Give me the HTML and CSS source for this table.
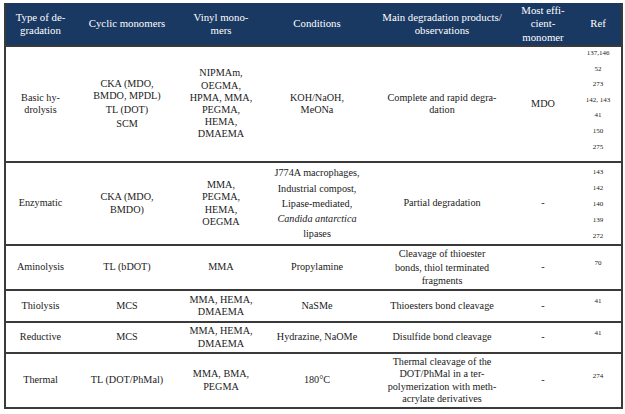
FILE: index.html
```html
<!DOCTYPE html>
<html lang="en">
<head>
<meta charset="utf-8">
<title>Degradation of polymers</title>
<link rel="stylesheet" href="styles.css">
</head>
<body>
<table class="deg">
  <colgroup>
    <col class="c-type"><col class="c-cyc"><col class="c-vin"><col class="c-cond"><col class="c-main"><col class="c-most"><col class="c-ref">
  </colgroup>
  <thead>
    <tr class="hd">
      <th class="type">Type of de-<br>gradation</th>
      <th>Cyclic monomers</th>
      <th>Vinyl mono-<br>mers</th>
      <th>Conditions</th>
      <th>Main degradation products/<br>observations</th>
      <th>Most effi-<br>cient-<br>monomer</th>
      <th class="ref">Ref</th>
    </tr>
  </thead>
  <tbody>
    <tr class="r-basic">
      <td class="type">Basic hy-<br>drolysis</td>
      <td><p class="para">CKA (MDO,<br>BMDO, MPDL)</p><p class="para">TL (DOT)</p><p class="para">SCM</p></td>
      <td>NIPMAm,<br>OEGMA,<br>HPMA, MMA,<br>PEGMA,<br>HEMA,<br>DMAEMA</td>
      <td>KOH/NaOH,<br>MeONa</td>
      <td>Complete and rapid degra-<br>dation</td>
      <td class="most big">MDO</td>
      <td class="ref top"><div class="refs basic"><span>137,146</span><span>52</span><span>273</span><span>142, 143</span><span>41</span><span>150</span><span>275</span></div></td>
    </tr>
    <tr class="r-enz">
      <td class="type">Enzymatic</td>
      <td>CKA (MDO,<br>BMDO)</td>
      <td>MMA,<br>PEGMA,<br>HEMA,<br>OEGMA</td>
      <td class="loose">J774A macrophages,<br>Industrial compost,<br>Lipase-mediated,<br><i>Candida antarctica</i><br>lipases</td>
      <td>Partial degradation</td>
      <td class="most">-</td>
      <td class="ref top"><div class="refs enz"><span>143</span><span>142</span><span>140</span><span>139</span><span>272</span></div></td>
    </tr>
    <tr class="r-amino">
      <td class="type">Aminolysis</td>
      <td>TL (bDOT)</td>
      <td>MMA</td>
      <td>Propylamine</td>
      <td class="mid">Cleavage of thioester<br>bonds, thiol terminated<br>fragments</td>
      <td class="most">-</td>
      <td class="ref up">70</td>
    </tr>
    <tr class="r-thio">
      <td class="type">Thiolysis</td>
      <td>MCS</td>
      <td>MMA, HEMA,<br>DMAEMA</td>
      <td>NaSMe</td>
      <td>Thioesters bond cleavage</td>
      <td class="most">-</td>
      <td class="ref up">41</td>
    </tr>
    <tr class="r-red">
      <td class="type">Reductive</td>
      <td>MCS</td>
      <td>MMA, HEMA,<br>DMAEMA</td>
      <td>Hydrazine, NaOMe</td>
      <td>Disulfide bond cleavage</td>
      <td class="most">-</td>
      <td class="ref up">41</td>
    </tr>
    <tr class="r-therm">
      <td class="type">Thermal</td>
      <td>TL (DOT/PhMal)</td>
      <td>MMA, BMA,<br>PEGMA</td>
      <td>180°C</td>
      <td>Thermal cleavage of the<br>DOT/PhMal in a ter-<br>polymerization with meth-<br>acrylate derivatives</td>
      <td class="most">-</td>
      <td class="ref up">274</td>
    </tr>
  </tbody>
</table>
</body>
</html>
```

FILE: styles.css
```css
html, body {
  margin: 0;
  padding: 0;
  background: #ffffff;
}

body {
  padding: 3px 0 0 4px;
  font-family: "Liberation Serif", "Times New Roman", Times, serif;
  color: #1a1a1a;
}

.deg {
  border-collapse: collapse;
  table-layout: fixed;
  width: 617px;
  font-family: inherit;
  border-left: 2px solid #3a3a3a;
  border-right: 2px solid #3a3a3a;
  border-bottom: 2px solid #3a3a3a;
}

.c-type { width: 76px; }
.c-cyc { width: 92px; }
.c-vin { width: 96px; }
.c-cond { width: 96px; }
.c-main { width: 154px; }
.c-most { width: 48px; }
.c-ref { width: 55px; }

.deg th,
.deg td {
  padding: 0;
  font-family: inherit;
  text-align: center;
  vertical-align: middle;
  white-space: nowrap;
}

.hd {
  height: 43px;
  background: #193862;
}

.hd th {
  color: #ffffff;
  font-weight: normal;
  font-size: 10.8px;
  line-height: 13.5px;
  border-bottom: 2px solid #3a3a3a;
}

.deg td {
  font-size: 10.2px;
  line-height: 12.2px;
  border-bottom: 2px solid #3a3a3a;
}

.deg .type {
  padding-right: 6px;
}

.deg .ref {
  padding-left: 8px;
}

.para {
  margin: 0 0 2px;
}

.para:last-child {
  margin-bottom: 0;
}

.big {
  font-size: 11px;
}

.deg td.loose {
  line-height: 15.2px;
}

.deg td.mid {
  line-height: 13.5px;
}

.deg td.top {
  vertical-align: top;
}

.deg td.up {
  font-size: 7px;
  padding-bottom: 9px;
}

.refs {
  display: flex;
  flex-direction: column;
  align-items: center;
  font-size: 7px;
}

.refs.basic span {
  line-height: 15.6px;
}

.refs.basic {
  margin-top: -1px;
}

.refs.enz span {
  line-height: 16px;
}

.refs.enz {
  margin-top: 1px;
}

.r-basic { height: 116px; }
.r-enz { height: 80px; }
.r-amino { height: 45px; }
.r-thio { height: 32px; }
.r-red { height: 31px; }
.r-therm { height: 55px; }
```
